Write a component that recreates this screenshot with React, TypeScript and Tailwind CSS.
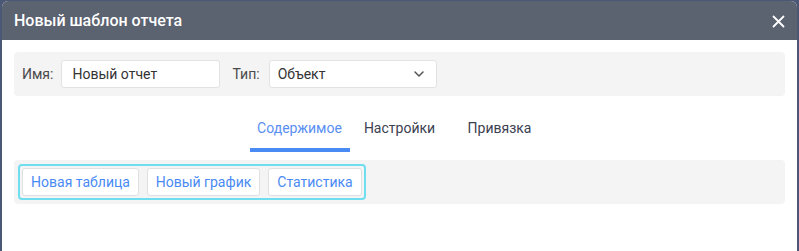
import React from "react";

export default function App() {
  return (
    <div className="w-[799px] h-[251px] bg-[#4a5876] overflow-hidden" style={{ fontFamily: "Roboto, 'Noto Sans', sans-serif" }}>
      <div className="ml-[2px] mt-[1px] w-[795px] h-[250px] bg-white rounded-t-[6px] overflow-hidden flex flex-col">
        <div className="h-[39px] bg-[#5b6270] flex items-center justify-between pl-[12px] pr-[12px] shrink-0">
          <span className="text-white text-[16px] font-medium leading-none">Новый шаблон отчета</span>
          <svg width="13" height="13" viewBox="0 0 13 13" className="mt-[1px]">
            <path d="M1.5 1.5 L11.5 11.5 M11.5 1.5 L1.5 11.5" stroke="#ffffff" strokeWidth="1.8" strokeLinecap="round" />
          </svg>
        </div>
        <div className="px-[12px] pt-[12px]">
          <div className="h-[44px] bg-[#f4f4f4] rounded-[4px] flex items-center pl-[8px]">
            <span className="text-[14px] text-[#4a4a4a] mr-[8px]">Имя:</span>
            <div className="w-[159px] h-[28px] bg-white border border-[#e2e2e2] rounded-[3px] flex items-center pl-[10px] text-[14px] text-[#333]">
              Новый отчет
            </div>
            <span className="text-[14px] text-[#4a4a4a] ml-[12px] mr-[9px]">Тип:</span>
            <div className="w-[168px] h-[28px] bg-white border border-[#e2e2e2] rounded-[3px] flex items-center justify-between pl-[8px] pr-[12px] text-[14px] text-[#333]">
              <span>Объект</span>
              <svg width="10" height="6" viewBox="0 0 10 6">
                <path d="M1 1 L5 5 L9 1" stroke="#555" strokeWidth="1.5" fill="none" strokeLinecap="round" strokeLinejoin="round" />
              </svg>
            </div>
          </div>
          <div className="flex justify-center mt-[8px]">
            <div className="w-[100px] flex flex-col">
              <div className="h-[44px] pt-[4px] flex items-center justify-center text-[14px] text-[#5a8ff2]">Содержимое</div>
              <div className="h-[4px] bg-[#4a8af5]" />
            </div>
            <div className="w-[100px] flex flex-col">
              <div className="h-[44px] pt-[4px] flex items-center justify-center text-[14px] text-[#3b4150]">Настройки</div>
              <div className="h-[4px]" />
            </div>
            <div className="w-[100px] flex flex-col">
              <div className="h-[44px] pt-[4px] flex items-center justify-center text-[14px] text-[#3b4150]">Привязка</div>
              <div className="h-[4px]" />
            </div>
          </div>
          <div className="mt-[8px] h-[44px] bg-[#f4f4f4] rounded-[4px] flex items-center pl-[4px]">
            <div className="border-2 border-[#6fdff0] rounded-[4px] p-[2px] flex gap-[8px]">
              <button className="w-[117px] h-[28px] bg-white border border-[#e0e0e0] rounded-[3px] text-[14px] text-[#4a8af5] flex items-center justify-center">Новая таблица</button>
              <button className="w-[113px] h-[28px] bg-white border border-[#e0e0e0] rounded-[3px] text-[14px] text-[#4a8af5] flex items-center justify-center">Новый график</button>
              <button className="w-[94px] h-[28px] bg-white border border-[#e0e0e0] rounded-[3px] text-[14px] text-[#4a8af5] flex items-center justify-center">Статистика</button>
            </div>
          </div>
        </div>
      </div>
    </div>
  );
}
